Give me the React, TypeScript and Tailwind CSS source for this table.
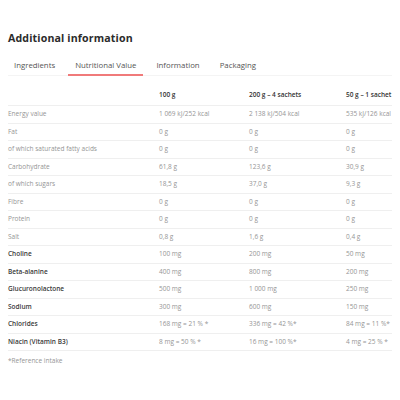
const tabs = ["Ingredients", "Nutritional Value", "Information", "Packaging"];

const rows: { label: string; values: string[]; bold?: boolean }[] = [
  { label: "Energy value", values: ["1 069 kJ/252 kcal", "2 138 kJ/504 kcal", "535 kJ/126 kcal"] },
  { label: "Fat", values: ["0 g", "0 g", "0 g"] },
  { label: "of which saturated fatty acids", values: ["0 g", "0 g", "0 g"] },
  { label: "Carbohydrate", values: ["61,8 g", "123,6 g", "30,9 g"] },
  { label: "of which sugars", values: ["18,5 g", "37,0 g", "9,3 g"] },
  { label: "Fibre", values: ["0 g", "0 g", "0 g"] },
  { label: "Protein", values: ["0 g", "0 g", "0 g"] },
  { label: "Salt", values: ["0,8 g", "1,6 g", "0,4 g"] },
  { label: "Choline", values: ["100 mg", "200 mg", "50 mg"], bold: true },
  { label: "Beta-alanine", values: ["400 mg", "800 mg", "200 mg"], bold: true },
  { label: "Glucuronolactone", values: ["500 mg", "1 000 mg", "250 mg"], bold: true },
  { label: "Sodium", values: ["300 mg", "600 mg", "150 mg"], bold: true },
  { label: "Chlorides", values: ["168 mg = 21 % *", "336 mg = 42 %*", "84 mg = 11 %*"], bold: true },
  { label: "Niacin (Vitamin B3)", values: ["8 mg = 50 % *", "16 mg = 100 %*", "4 mg = 25 % *"], bold: true },
];

const cols = "grid grid-cols-[151px_90px_97px_1fr] items-center border-b border-[#efefef]";

export default function App() {
  return (
    <div className="w-[400px] h-[400px] bg-white px-2 pt-[32px] font-['Open_Sans',sans-serif] text-[6.5px]">
      <h2 className="text-[10.6px] font-bold leading-[13px] text-[#2b2b2b] tracking-[0.15px]">
        Additional information
      </h2>

      {/* Tabs */}
      <div className="mt-[15px] flex border-b border-[#f4f4f4]">
        {tabs.map((t, i) => (
          <div
            key={t}
            className={`px-[7px] pb-[4px] text-[7.8px] leading-[10px] text-[#555] ${
              i === 1 ? "border-b-2 border-[#f07a7a] -mb-px" : ""
            } ${i === 0 ? "ml-[-1px]" : "ml-[6px]"}`}
          >
            {t}
          </div>
        ))}
      </div>

      {/* Table */}
      <div className="mt-[9px]">
        <div className={`${cols} h-[21px] font-semibold text-[#333]`}>
          <div />
          <div>100 g</div>
          <div>200 g – 4 sachets</div>
          <div>50 g – 1 sachet</div>
        </div>
        {rows.map((r) => (
          <div key={r.label} className={`${cols} h-[17.5px]`}>
            <div className={r.bold ? "font-semibold text-[#3a3a3a]" : "text-[#959595]"}>{r.label}</div>
            {r.values.map((v, i) => (
              <div key={i} className="text-[#959595]">
                {v}
              </div>
            ))}
          </div>
        ))}
        <div className="mt-[5px] text-[#959595]">*Reference intake</div>
      </div>
    </div>
  );
}
